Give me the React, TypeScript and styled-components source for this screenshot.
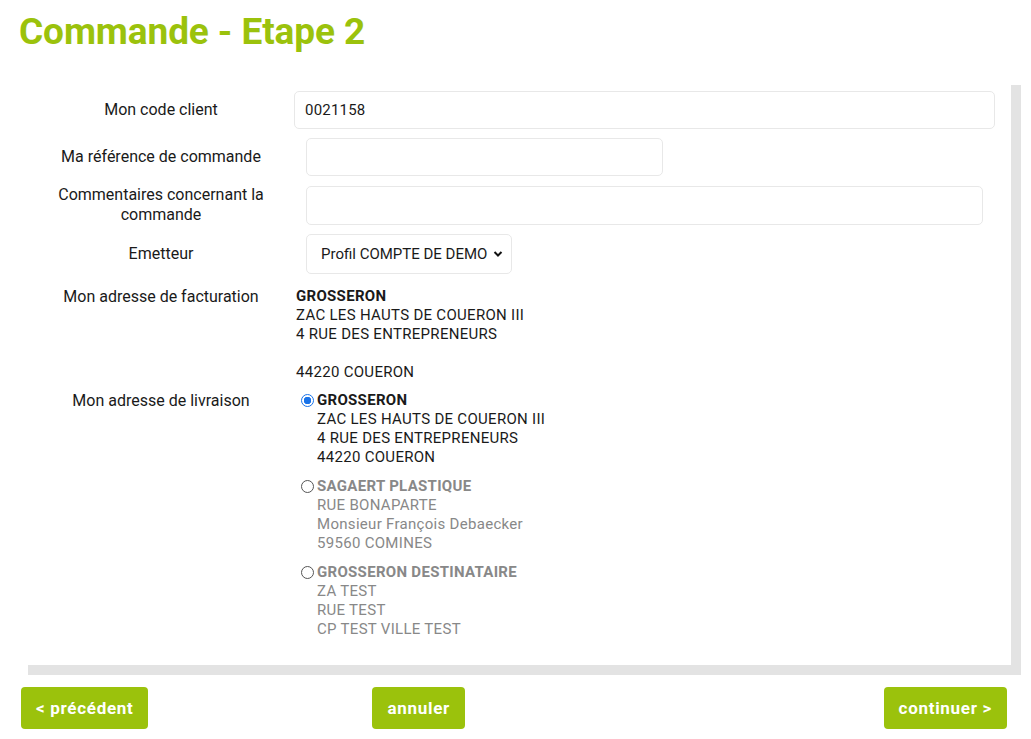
import styled, { createGlobalStyle } from 'styled-components';

const GlobalStyle = createGlobalStyle`
  body {
    margin: 0;
    background: #ffffff;
    font-family: Roboto, "Open Sans", Arial, sans-serif;
    color: #1a1a1a;
  }
`;

const green = '#9bc20c';

const deliveries = [
  {
    name: 'GROSSERON',
    lines: ['ZAC LES HAUTS DE COUERON III', '4 RUE DES ENTREPRENEURS', '44220 COUERON'],
    checked: true,
  },
  {
    name: 'SAGAERT PLASTIQUE',
    lines: ['RUE BONAPARTE', 'Monsieur François Debaecker', '59560 COMINES'],
    checked: false,
  },
  {
    name: 'GROSSERON DESTINATAIRE',
    lines: ['ZA TEST', 'RUE TEST', 'CP TEST VILLE TEST'],
    checked: false,
  },
];

const App = () => {
  return (
    <>
      <GlobalStyle />
      <Page>
        <Title>Commande - Etape 2</Title>
        <Panel>
          <Row>
            <Label>Mon code client</Label>
            <Input $width="701px" $offset="0px" defaultValue="0021158" />
          </Row>
          <Row>
            <Label>Ma référence de commande</Label>
            <Input $width="357px" $offset="12px" />
          </Row>
          <Row>
            <Label>
              Commentaires concernant la
              <br />
              commande
            </Label>
            <Input $width="677px" $offset="12px" $height="39px" />
          </Row>
          <Row>
            <Label>Emetteur</Label>
            <SelectBox>
              <span>Profil COMPTE DE DEMO</span>
              <svg width="10" height="8" viewBox="0 0 10 8">
                <path d="M1.5 2 L5 5.5 L8.5 2" fill="none" stroke="#111" strokeWidth="2" />
              </svg>
            </SelectBox>
          </Row>
          <Row $top="4px">
            <Label>Mon adresse de facturation</Label>
            <Address $indent="2px">
              <strong>GROSSERON</strong>
              <span>ZAC LES HAUTS DE COUERON III</span>
              <span>4 RUE DES ENTREPRENEURS</span>
              <span>&nbsp;</span>
              <span>44220 COUERON</span>
            </Address>
          </Row>
          <Row $top="0px">
            <Label>Mon adresse de livraison</Label>
            <Choices>
              {deliveries.map((d) => (
                <Choice key={d.name} $muted={!d.checked}>
                  <Radio $checked={d.checked} />
                  <Address>
                    <strong>{d.name}</strong>
                    {d.lines.map((l) => (
                      <span key={l}>{l}</span>
                    ))}
                  </Address>
                </Choice>
              ))}
            </Choices>
          </Row>
        </Panel>
        <Actions>
          <Button>&lt; précédent</Button>
          <Button $gap="224px">annuler</Button>
          <Button $gap="auto">continuer &gt;</Button>
        </Actions>
      </Page>
    </>
  );
};

export default App;

const Page = styled.div`
  width: 1031px;
  height: 739px;
  box-sizing: border-box;
  padding: 12px 10px 0 18px;
  overflow: hidden;
`;

const Title = styled.h1`
  margin: 0 0 0 1px;
  font-size: 37px;
  line-height: 40px;
  font-weight: 700;
  color: ${green};
  letter-spacing: -0.1px;
`;

const Panel = styled.div`
  margin-top: 23px;
  width: 993px;
  box-sizing: border-box;
  padding: 16px 0 26px 10px;
  background: #fff;
  box-shadow: 10px 10px 0 #e3e3e3;
  display: flex;
  flex-direction: column;
  gap: 9px;
`;

const Row = styled.div<{ $top?: string }>`
  display: flex;
  align-items: ${({ $top }) => ($top ? 'flex-start' : 'center')};
  margin-top: ${({ $top }) => $top || '0'};
`;

const Label = styled.div`
  width: 266px;
  flex-shrink: 0;
  text-align: center;
  font-size: 16px;
  line-height: 20px;
  color: #1a1a1a;
`;

const Input = styled.input<{ $width: string; $offset: string; $height?: string }>`
  width: ${({ $width }) => $width};
  height: ${({ $height }) => $height || '38px'};
  margin-left: ${({ $offset }) => $offset};
  box-sizing: border-box;
  border: 1px solid #e8e8e8;
  border-radius: 5px;
  padding: 0 10px;
  font-family: inherit;
  font-size: 15px;
  letter-spacing: 0.2px;
  color: #1a1a1a;
  outline: none;
`;

const SelectBox = styled.div`
  margin-left: 12px;
  width: 206px;
  height: 40px;
  box-sizing: border-box;
  border: 1px solid #e8e8e8;
  border-radius: 5px;
  padding: 0 8px 0 14px;
  display: flex;
  align-items: center;
  justify-content: space-between;
  font-size: 15px;
  color: #1a1a1a;
`;

const Address = styled.div<{ $indent?: string }>`
  display: flex;
  flex-direction: column;
  margin-left: ${({ $indent }) => $indent || '0'};
  font-size: 15px;
  line-height: 19px;
  letter-spacing: 0.3px;
  strong {
    font-weight: 700;
  }
`;

const Choices = styled.div`
  display: flex;
  flex-direction: column;
  gap: 10px;
  margin-left: 7px;
`;

const Choice = styled.div<{ $muted: boolean }>`
  display: flex;
  align-items: flex-start;
  gap: 3px;
  color: ${({ $muted }) => ($muted ? '#888888' : '#1a1a1a')};
`;

const Radio = styled.span<{ $checked: boolean }>`
  width: 13px;
  height: 13px;
  margin-top: 3px;
  box-sizing: border-box;
  border-radius: 50%;
  flex-shrink: 0;
  border: ${({ $checked }) => ($checked ? '1px solid #1a73e8' : '1px solid #555')};
  background: ${({ $checked }) =>
    $checked ? 'radial-gradient(circle, #1a73e8 0 3.5px, #fff 4px)' : '#fff'};
`;

const Actions = styled.div`
  margin-top: 22px;
  width: 986px;
  margin-left: 3px;
  display: flex;
  align-items: center;
`;

const Button = styled.button<{ $gap?: string }>`
  height: 42px;
  padding: 0 15px;
  margin-left: ${({ $gap }) => $gap || '0'};
  border: none;
  border-radius: 4px;
  background: ${green};
  color: #fff;
  font-family: inherit;
  font-size: 17px;
  font-weight: 700;
  letter-spacing: 0.7px;
  cursor: pointer;
`;
